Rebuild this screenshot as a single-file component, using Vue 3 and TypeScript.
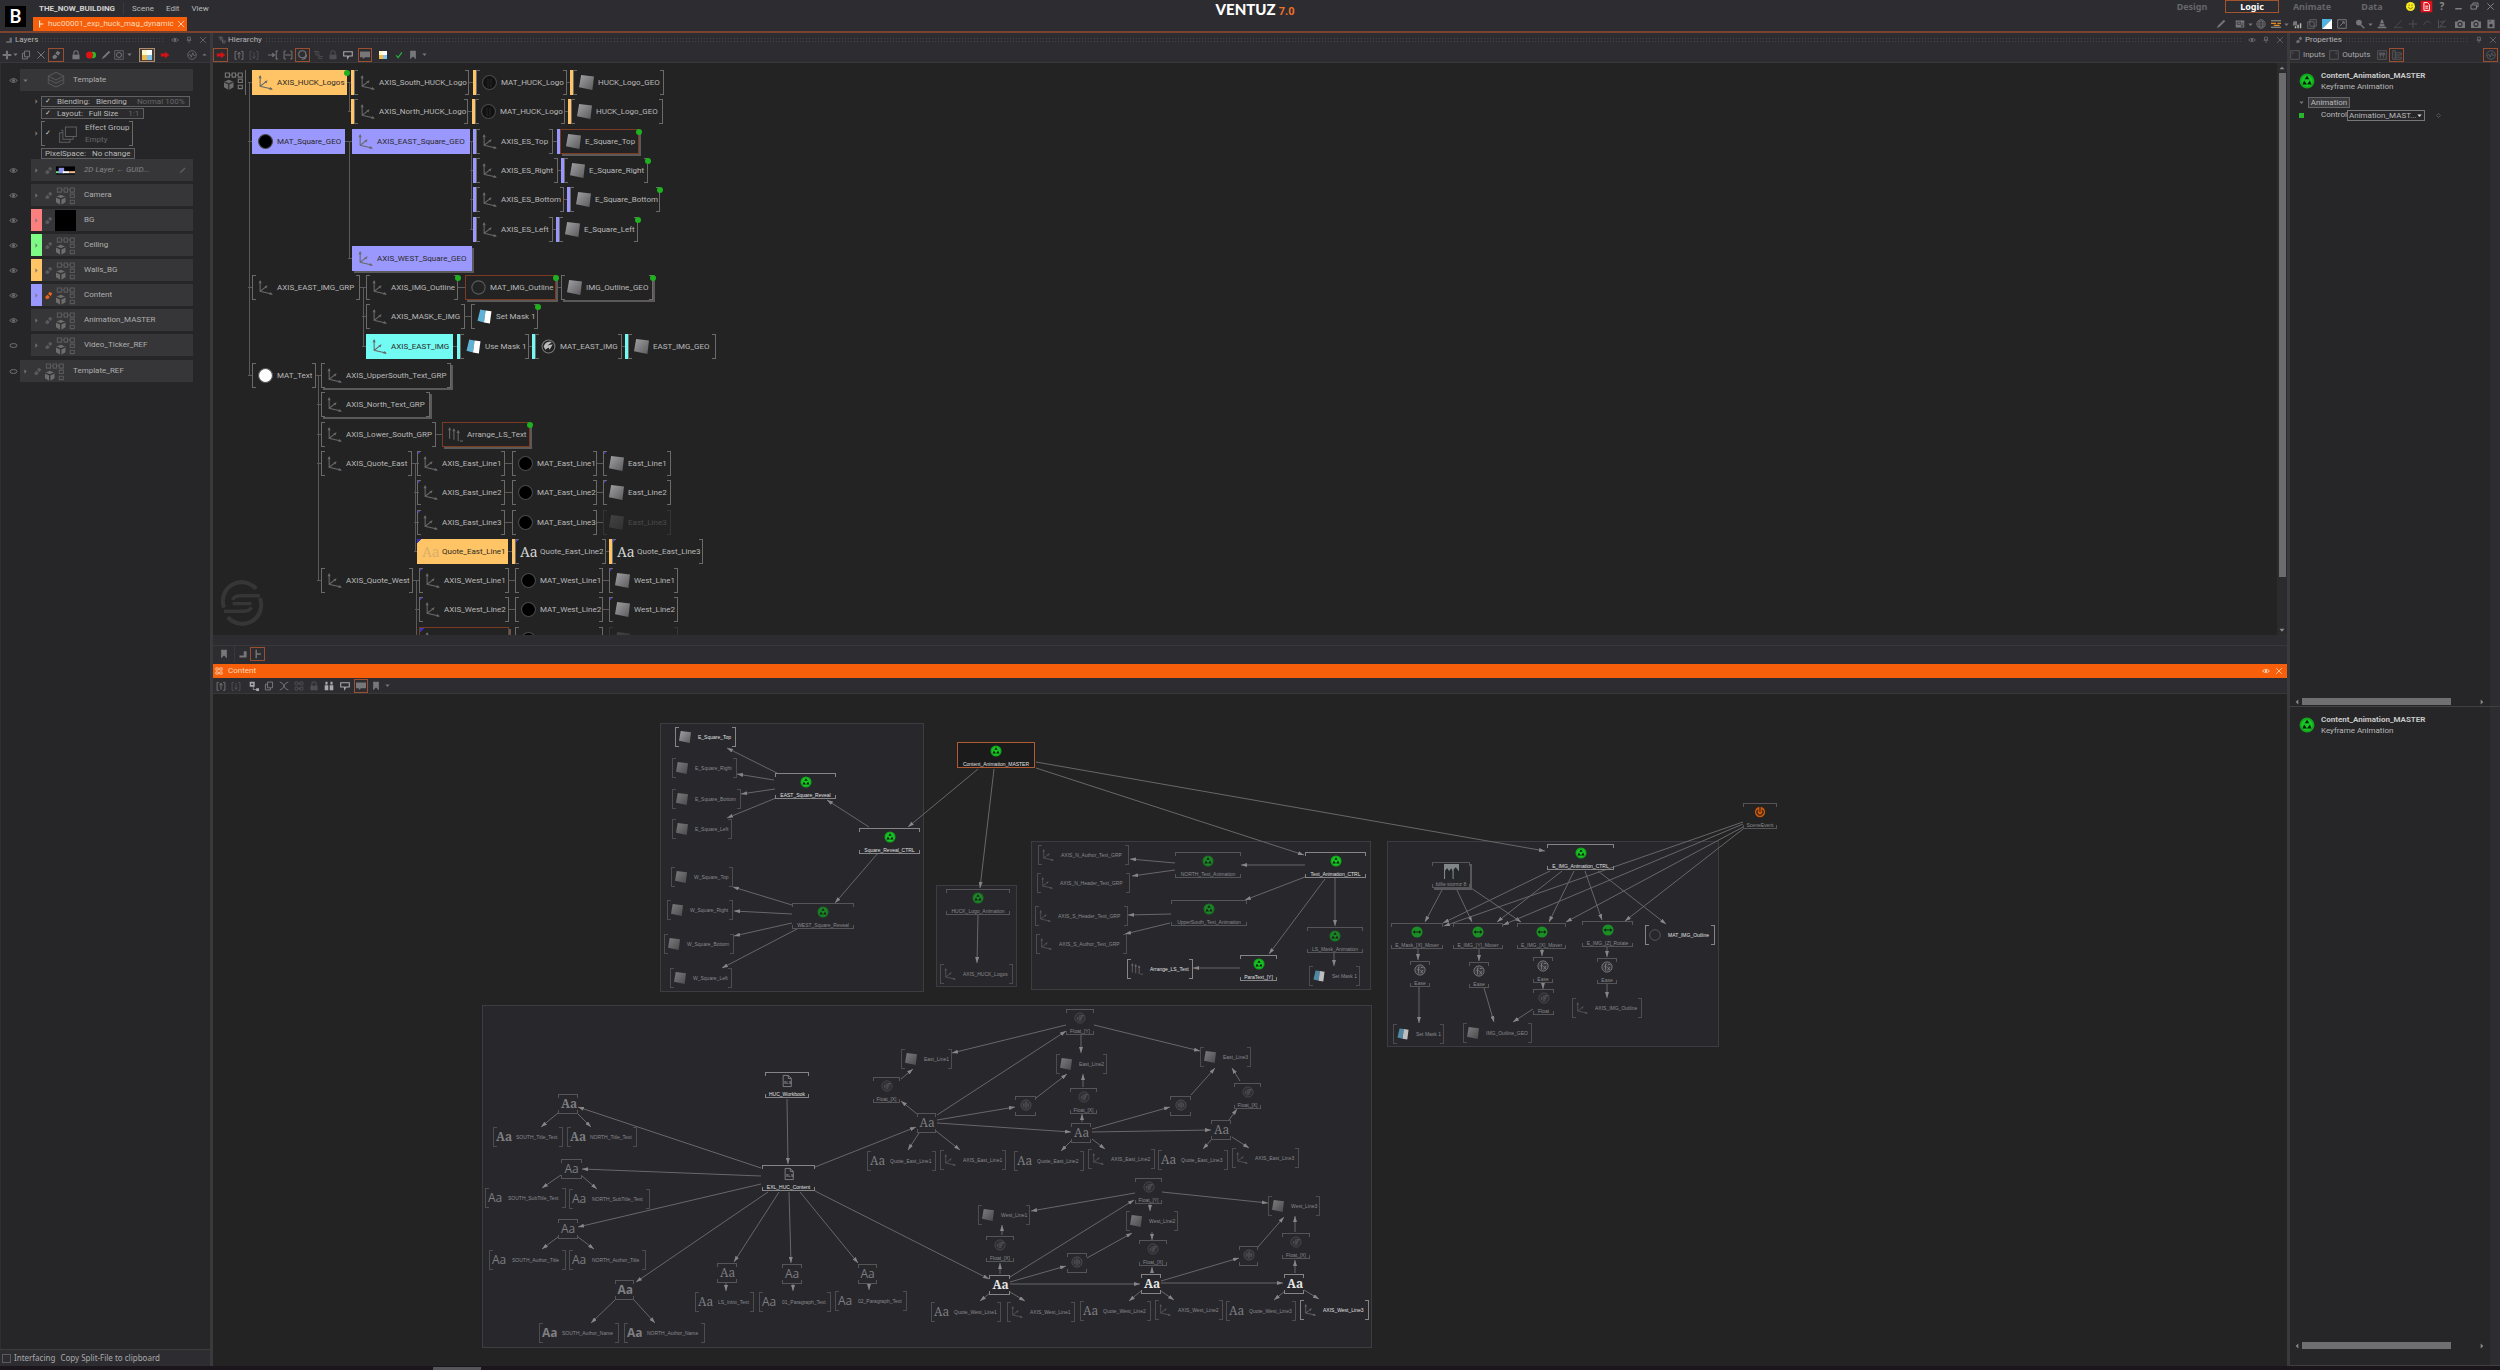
<script setup lang="ts">
import { h } from 'vue'

const S = 'fill="none" stroke="currentColor"'
const ICONS: Record<string, string> = {
  axis: `<path d="M2 1v9.500L13 13M2 10.500 8 6" ${S}/><path d="M0.500 3 2 0l1.500 3zM14 13.500l-3.500.3.800-2.600zM9 5 7.800 8 6 6z" fill="currentColor"/>`,
  multi: `<path d="M1.500 2v9M5.500 3v9M9.500 4v9M11 13h3" ${S}/><path d="M0 3l1.500-3L3 3zM4 4l1.500-3L7 4zM8 5.500l1.500-3 1.500 3z" fill="currentColor"/>`,
  plane: `<path d="M2 0 14 1.500 12.500 14 0 11.500z" fill="url(#planeFill)"/>`,
  black: `<circle cx="7" cy="7" r="6.500" fill="#000" stroke="#4a4a4a"/>`,
  white: `<circle cx="7" cy="7" r="6.500" fill="#fff" stroke="#555"/>`,
  ring: `<circle cx="7" cy="7" r="6.200" fill="none" stroke="#5c5c5c"/>`,
  huck: `<circle cx="7" cy="7" r="6.500" fill="#111" stroke="#4a4a4a"/><path d="M5 3.500v6l1 2V4zM9 3.500v6l-1 2V4z" fill="#000" stroke="#333" stroke-width=".5"/>`,
  photo: `<circle cx="7" cy="7" r="6" fill="#222" stroke="#777"/><path d="M2.500 7C4 3 7 2 10 3L6 6l5-1-3 5-1-2-3 2z" fill="#bbb"/>`,
  mask: `<path d="M3 .5 8 1.300 6.500 12.500 .5 11z" fill="#5fb2d6"/><path d="M8 1.300 13.500 2 12 13.500 6.500 12.500z" fill="#fff"/>`,
  reel: `<circle cx="7" cy="7" r="6.500" fill="#12a51c"/><circle cx="7" cy="7" r="5" fill="#18c625"/><path d="M7 2.500 9 5.500H5zM3 10l1.500-3.500L7 10zM7 10l2.500-3.500L11 10z" fill="#062008"/>`,
  swap: `<circle cx="7" cy="7" r="6.500" fill="#1a9a26"/><path d="M2 7l2.500-2v1.400h5V5L12 7 9.500 9V7.700h-5V9z" fill="#04220a"/>`,
  ease: `<circle cx="7" cy="7" r="6" fill="#3c3c40" stroke="#8a8a8a"/><path d="M6.500 3.500H5.300V11M4 6.500h2.500M7.500 7l3 4M10.500 7l-3 4M8 4h3" ${S}/>`,
  calc: `<circle cx="7" cy="7" r="6" fill="#333338" stroke="#6d6d70" stroke-width=".8"/><path d="M6 4v7M8 10.500V4h3l-3 4M4 6v3" ${S} stroke-width=".8"/>`,
  dotted: `<circle cx="7" cy="7" r="6" fill="#3b3b40" stroke="#66666a"/><path d="M7 3v8M4.500 5v4M9.500 5v4" ${S}/>`,
  event: `<circle cx="7" cy="7" r="6" fill="#d9600f"/><path d="M7 0v7M4.500 4.500a3.500 3.500 0 1 0 5 0" fill="none" stroke="#402008" stroke-width="1.400"/>`,
  xls: `<path d="M2.500 .5h6l3.500 3.500v9.500h-9.500zM8.500 .5V4H12" ${S}/><text x="3.200" y="10" font-size="4.500" font-family="Liberation Sans" font-weight="700" fill="currentColor">XLS</text>`,
  people: `<rect x="0" y="0" width="14" height="14" fill="#8b9293"/><path d="M1 14V6l2-2 2 3v7zM5 14V6l2-2 1 3v7zM9 14V5l2-2 3 4v7z" fill="#24292b"/>`,
  tree: `<path d="M1 1.500h3v3H1zM6 1.500h2.500v3H6zM10.500 1.500h3v3h-3zM4 3h2M8.500 3h2M10.500 6h3v2.500h-3zM10.500 10.500h3V13h-3z" ${S} stroke-width=".8"/><path d="M0 8l3.500-1.500L7 8v4L3.500 14 0 12z" fill="#6d6d6d"/><path d="M0 8l3.500 1.500L7 8M3.500 9.500V14" fill="none" stroke="#333"/>`,
  eye: `<path d="M1 7q6-6 12 0-6 6-12 0z" ${S} stroke-width="1.400"/><circle cx="7" cy="7" r="2" fill="currentColor"/>`,
  shut: `<ellipse cx="7" cy="7" rx="5.500" ry="3" ${S} stroke-width="1.400"/>`,
  pin: `<path d="M4.500 2h5v5h-5zM3 7.500h8M7 8v4" ${S} stroke-width="1.400"/>`,
  x: `<path d="M2 2l10 10M12 2 2 12" ${S} stroke-width="1.400"/>`,
  plus: `<path d="M7 1v12M1 7h12" ${S} stroke-width="3"/>`,
  thin: `<path d="M7 1v12M1 7h12" ${S} stroke-width="1.400"/>`,
  caret: `<path d="M1 4h12L7 11z" fill="currentColor"/>`,
  right: `<path d="M4 1v12l6-6z" fill="currentColor"/>`,
  left: `<path d="M10 1v12L4 7z" fill="currentColor"/>`,
  up: `<path d="M1 10h12L7 4z" fill="currentColor"/>`,
  copy: `<path d="M5 1.500h7v8H5zM5 4.500H2v8h7V10" ${S} stroke-width="1.400"/>`,
  paint: `<path d="M9 1l4 3-3 4-4-3zM5.500 6l3.500 3-2 3-4 .5L2 9z" fill="currentColor"/><path d="M6 5l4 3.500" stroke="#2d2d31"/>`,
  lock: `<path d="M2 6.500h10V13H2z" fill="currentColor"/><path d="M4 6.500V4a3 3 0 0 1 6 0v2.500" ${S} stroke-width="1.500"/>`,
  rg: `<circle cx="9.500" cy="7" r="4.500" fill="#22c022"/><circle cx="5" cy="7" r="5" fill="#e01212"/>`,
  pencil: `<path d="M1 13l2-4 8-8 2 2-8 8z" fill="currentColor"/>`,
  frame: `<path d="M1 1h12v12H1z" ${S}/><circle cx="7" cy="7" r="3.500" ${S} stroke-width="1.400"/>`,
  grid: `<path d="M0 0h7v7H0z" fill="#fff7c8"/><path d="M7 0h7v7H7z" fill="#fff"/><path d="M0 7h7v7H0z" fill="#f2b84a"/><path d="M7 7h7v7H7z" fill="#7fc4ec"/>`,
  arrow: `<path d="M1 5h6V2l6 5-6 5V9H1z" fill="#d01217"/>`,
  wave: `<circle cx="7" cy="7" r="6" ${S}/><path d="M2 8l2-2 2 4 2-6 2 4 2-1" ${S}/>`,
  bup: `<path d="M4 2H1.500v11H4M10 2h2.500v11H10M7 12V4M5 6l2-3 2 3" ${S} stroke-width="1.300"/>`,
  bdn: `<path d="M4 2H1.500v11H4M10 2h2.500v11H10M7 3v8M5 9l2 3 2-3" ${S} stroke-width="1.200" opacity=".5"/>`,
  into: `<path d="M0 7h8M6 4.500 9 7 6 9.500M14 1.500h-2.500v11H14" ${S} stroke-width="1.500"/>`,
  span: `<path d="M4 1.500H1.500v11H4M10 1.500h2.500v11H10M3 7h8" ${S} stroke-width="1.400"/>`,
  moon: `<circle cx="6" cy="6" r="5" ${S} stroke-width="1.500"/><path d="M12 5a6 6 0 0 1-8 8q7 0 8-8z" fill="currentColor"/>`,
  stair: `<path d="M1 2h7M4 2v5h6M8 7v5h5M5 4h4M9 9h5" ${S} stroke-width="1.300"/>`,
  bubble: `<path d="M1 2.500h12v6H8.500l-2 3v-3H1z" ${S} stroke-width="1.500"/>`,
  bubblef: `<path d="M0 2h14v8H7l-3 2.500V10H0z" fill="currentColor"/>`,
  check: `<path d="M2 7.500l3.500 4L12 2.500" ${S} stroke-width="2"/>`,
  book: `<path d="M3 1h8v12L7 9l-4 4z" fill="currentColor"/>`,
  corner: `<path d="M12 3v9H2v-3h6V3z" fill="currentColor"/>`,
  branch: `<path d="M4.500 1v12M4.500 7H11" ${S} stroke-width="2"/>`,
  nodes: `<path d="M1 1h7v7H1zM10 10h4v4h-4z" fill="currentColor"/><path d="M3 3.500h3v2H3z" fill="#2d2d31"/><path d="M6 8v4h4" ${S}/>`,
  cross: `<path d="M1 1.500q5 1 6 5.500 1-4.500 6-5.500M1 12.500q5-1 6-5.500 1 4.500 6 5.500" ${S} stroke-width="1.300"/>`,
  boxes: `<path d="M1.500 1.500h4v4h-4zM8.500 1.500h4v4h-4zM1.500 8.500h4v4h-4zM8.500 8.500h4v4h-4zM5.500 3.500h3M5.500 10.500h3" ${S} stroke-width="1.300"/>`,
  group: `<path d="M1 6h5v7H1zM8 6h5v7H8zM2 1h3v4H2zM9 1h3v4H9z" fill="currentColor"/>`,
  stack: `<path d="M5 1.500h8.500V9H5zM3 4H1.500M3 4v7h8V9M3 6H.5v7.500h8V11" ${S} stroke-width=".8"/>`,
  layers: `<path d="M1 4l6-3 6 3-6 3zM1 4v2.500l6 3 6-3V4M1 6.500V9.500l6 3 6-3v-3" ${S} stroke-width=".7"/>`,
  thumb: `<path d="M0 4h14v6H0z" fill="#000"/><path d="M0 7.500h5v1.500H0z" fill="#5fe08c"/><path d="M2 5h4v4H2z" fill="#8f8fe8"/><path d="M5 7.500h5v1.500H5z" fill="#fff"/><path d="M10 7.500h4v1.500h-4z" fill="#f3b98b"/>`,
  win: `<path d="M1 2h12v10H1z" fill="currentColor"/><path d="M3 4.500h5v3H3zM9 8v2.500h2V5" fill="none" stroke="#2d2d31"/>`,
  globe: `<circle cx="7" cy="7" r="6" ${S}/><ellipse cx="7" cy="7" rx="2.800" ry="6" ${S}/><path d="M1 7h12M2 4h10M2 10h10" ${S}/>`,
  bars: `<path d="M0 2.500h14M0 11.500h14" stroke="#aaa" stroke-width="1.300"/><path d="M0 6h7M9 6h5M4 9h8" stroke="#e98a1d" stroke-width="1.800"/>`,
  hand: `<path d="M2 3h5v6H1z" fill="currentColor"/><path d="M4 13h2v-3H4zM7.500 13h2V8h-2zM11 13h2V6h-2z" fill="#bbb"/>`,
  cube: `<path d="M1 4h9v9H1zM4 1h9v9H4z" ${S}/>`,
  bw: `<path d="M0 0h14L0 14z" fill="#4db4e4"/><path d="M14 0v14H0z" fill="#fff"/>`,
  scale: `<path d="M1 1h12v12H1zM4 10l6-6M7 4h3v3" ${S} stroke-width="1.400"/>`,
  lens: `<circle cx="5.500" cy="5" r="4" fill="currentColor"/><path d="M8 8l5 5" ${S} stroke-width="2"/>`,
  cone: `<path d="M6 1h2l3 9H3zM1 11h12v2H1z" fill="currentColor"/><path d="M4 6.500h6" stroke="#2d2d31"/>`,
  angle: `<path d="M12 2 2 12h11" ${S} opacity=".5"/>`,
  arc: `<path d="M2 9q2-6 6-6 4 1 4 3" ${S} opacity=".5"/>`,
  axes: `<path d="M2 1v12M12 1 3 12M4 11h9M4 4h6" ${S} opacity=".7"/>`,
  cam: `<path d="M0 3.500h3.500L5 1.500h4l1.500 2H14V12.500H0z" fill="currentColor"/><circle cx="7" cy="7.500" r="2.800" fill="none" stroke="#2d2d31" stroke-width="1.600"/>`,
  disk: `<path d="M2 1h10v12H2z" fill="currentColor"/><circle cx="7" cy="9" r="2.400" fill="#2d2d31"/><path d="M4 3h3" stroke="#2d2d31"/>`,
  smile: `<circle cx="7" cy="7" r="7" fill="#f6ea22"/><path d="M3.500 8.500q3.500 4 7 0M4.800 4v2M9.200 4v2" fill="none" stroke="#6a6200" stroke-width="1.300"/>`,
  doc: `<path d="M-2-2h18v18H-2z" fill="#e0101c"/><path d="M3 1h5.500L11.500 4v9H3zM5 6.500h4.500M5 9.500h4.500" fill="none" stroke="#fff" stroke-width="1.500"/>`,
  min: `<path d="M2 10.500h10" ${S} stroke-width="2"/>`,
  rest: `<path d="M4.500 4V1.500h8v6H10M1.500 4.500H10v6.500H1.500z" ${S} stroke-width="1.400"/>`,
  inp: `<path d="M1 1h12v12H1zM4 3v3" ${S}/>`,
  outp: `<path d="M1 1h12v12H1zM10 3v3" ${S}/>`,
  pins: `<path d="M1 1h12v12H1zM5 4v7M9 4v7M3.500 4h3v3h-3zM7.500 4h3v3h-3z" ${S}/>`,
  rows: `<path d="M1 1h3.500v12H1zM4.500 4H13v3H4.500M4.500 10H13v3H4.500" ${S}/>`,
  dia: `<path d="M7 3l4 4-4 4-4-4z" ${S} stroke-width="1.400"/>`,
  ventuz: `<path d="M1.300 8.500A6 6 0 0 1 11.500 2.500M12.700 5.500A6 6 0 0 1 2.500 11.500" ${S} stroke-width="1.300"/><path d="M12.700 4.700H6.500Q4.500 4.700 4 6M4 7.200h6M1.300 9.600h6.200Q9.500 9.600 10 8.400" ${S} stroke-width="1.100"/>`,
}
const Ico = (p: { n: string }) => h('svg', { viewBox: '0 0 14 14', class: 'ico', 'aria-hidden': 'true', innerHTML: ICONS[p.n] })

type Tool = [icon: string, width: number, look?: string]
const layerTools: Tool[] = [['plus', 10], ['caret', 6, 'small'], ['copy', 15], ['x', 15], ['paint', 16, 'box'], ['', 4], ['lock', 15], ['rg', 15], ['pencil', 15], ['frame', 12], ['caret', 8, 'small'], ['', 6], ['grid', 16, 'box pale'], ['', 2], ['arrow', 15], ['', 12], ['wave', 16], ['up', 8, 'small']]
const hierTools: Tool[] = [['arrow', 15, 'box'], ['', 3], ['bup', 15], ['bdn', 15], ['', 4], ['into', 15], ['span', 15], ['moon', 15, 'box'], ['stair', 15, 'off'], ['lock', 15, 'off'], ['bubble', 16, 'lit'], ['', 2], ['bubblef', 14, 'box'], ['', 3], ['grid', 15, 'tiny'], ['', 1], ['check', 15, 'green'], ['book', 14], ['caret', 8, 'small']]
const contentTools: Tool[] = [['bup', 15], ['bdn', 15], ['', 3], ['nodes', 15, 'lit'], ['copy', 15], ['cross', 15], ['boxes', 15, 'off'], ['lock', 15, 'off'], ['group', 16, 'lit'], ['bubble', 15, 'lit'], ['', 2], ['bubblef', 14, 'box'], ['book', 15], ['caret', 8, 'small']]
const topTools: Tool[] = [['pencil', 16], ['', 3], ['win', 16], ['caret', 5, 'small'], ['globe', 16], ['bars', 14], ['caret', 6, 'small'], ['hand', 15], ['cube', 15], ['bw', 15], ['scale', 15], ['', 3], ['lens', 15], ['caret', 7, 'small'], ['cone', 16], ['angle', 15], ['thin', 15, 'off'], ['arc', 14], ['axes', 16], ['', 2], ['cam', 16], ['cam', 15], ['disk', 15]]
const windowTools = ['smile', 'doc', '?', 'min', 'rest', 'x']
const modes = ['Design', 'Logic', 'Animate', 'Data']

interface Layer { name: string; icon: string; color?: string; off?: boolean; active?: boolean; italic?: boolean }
const layers: Layer[] = [
  { name: '2D Layer ← GUID...', icon: 'thumb', italic: true },
  { name: 'Camera', icon: 'tree' },
  { name: 'BG', icon: 'bg', color: '#fb7f7f' },
  { name: 'Ceiling', icon: 'tree', color: '#7dfb84' },
  { name: 'Walls_BG', icon: 'tree', color: '#fec465' },
  { name: 'Content', icon: 'tree', color: '#9a98fd', active: true },
  { name: 'Animation_MASTER', icon: 'tree' },
  { name: 'Video_Ticker_REF', icon: 'tree', off: true },
]

// Hierarchy tree: row, left, right, icon, label, look
type HNode = [number, number, number, string, string, string?]
const tree: HNode[] = [
  [0, 252, 347, 'axis', 'AXIS_HUCK_Logos', 'fy dot'], [0, 351, 469, 'axis', 'AXIS_South_HUCK_Logo', 'by'], [0, 473, 567, 'huck', 'MAT_HUCK_Logo', 'by'], [0, 570, 664, 'plane', 'HUCK_Logo_GEO', 'by'],
  [1, 351, 468, 'axis', 'AXIS_North_HUCK_Logo', 'by'], [1, 472, 565, 'huck', 'MAT_HUCK_Logo', 'by'], [1, 568, 663, 'plane', 'HUCK_Logo_GEO', 'by'],
  [2, 252, 345, 'black', 'MAT_Square_GEO', 'fp'], [2, 352, 470, 'axis', 'AXIS_EAST_Square_GEO', 'fp'], [2, 473, 553, 'axis', 'AXIS_ES_Top', 'bp'], [2, 557, 639, 'plane', 'E_Square_Top', 'bp sel shade dot'],
  [3, 473, 558, 'axis', 'AXIS_ES_Right', 'bp'], [3, 561, 648, 'plane', 'E_Square_Right', 'bp dot'],
  [4, 473, 564, 'axis', 'AXIS_ES_Bottom', 'bp'], [4, 567, 660, 'plane', 'E_Square_Bottom', 'bp dot'],
  [5, 473, 553, 'axis', 'AXIS_ES_Left', 'bp'], [5, 556, 638, 'plane', 'E_Square_Left', 'bp dot'],
  [6, 352, 472, 'axis', 'AXIS_WEST_Square_GEO', 'fp shade'],
  [7, 252, 360, 'axis', 'AXIS_EAST_IMG_GRP'], [7, 366, 458, 'axis', 'AXIS_IMG_Outline', 'dot'], [7, 465, 556, 'ring', 'MAT_IMG_Outline', 'sel shade dot'], [7, 561, 653, 'plane', 'IMG_Outline_GEO', 'shade dot'],
  [8, 366, 465, 'axis', 'AXIS_MASK_E_IMG'], [8, 471, 538, 'mask', 'Set Mask 1', 'dot'],
  [9, 366, 453, 'axis', 'AXIS_EAST_IMG', 'fc'], [9, 457, 529, 'mask', 'Use Mask 1', 'bc'], [9, 532, 622, 'photo', 'MAT_EAST_IMG', 'bc'], [9, 625, 716, 'plane', 'EAST_IMG_GEO', 'bc'],
  [10, 252, 316, 'white', 'MAT_Text'], [10, 321, 451, 'axis', 'AXIS_UpperSouth_Text_GRP', 'shade'],
  [11, 321, 430, 'axis', 'AXIS_North_Text_GRP', 'shade'],
  [12, 321, 436, 'axis', 'AXIS_Lower_South_GRP'], [12, 442, 530, 'multi', 'Arrange_LS_Text', 'sel shade dot'],
  [13, 321, 412, 'axis', 'AXIS_Quote_East'], [13, 417, 505, 'axis', 'AXIS_East_Line1', 'mark'], [13, 512, 597, 'black', 'MAT_East_Line1'], [13, 603, 671, 'plane', 'East_Line1', 'mark'],
  [14, 417, 505, 'axis', 'AXIS_East_Line2', 'mark'], [14, 512, 597, 'black', 'MAT_East_Line2'], [14, 603, 671, 'plane', 'East_Line2', 'mark'],
  [15, 417, 505, 'axis', 'AXIS_East_Line3', 'mark'], [15, 512, 597, 'black', 'MAT_East_Line3'], [15, 603, 671, 'plane', 'East_Line3', 'faded'],
  [16, 417, 508, 'Aa', 'Quote_East_Line1', 'fy mark'], [16, 512, 606, 'Aa', 'Quote_East_Line2', 'by mark'], [16, 609, 703, 'Aa', 'Quote_East_Line3', 'by mark'],
  [17, 321, 413, 'axis', 'AXIS_Quote_West'], [17, 419, 509, 'axis', 'AXIS_West_Line1', 'mark'], [17, 515, 603, 'black', 'MAT_West_Line1'], [17, 609, 678, 'plane', 'West_Line1', 'mark'],
  [18, 419, 509, 'axis', 'AXIS_West_Line2', 'mark'], [18, 515, 603, 'black', 'MAT_West_Line2'], [18, 609, 678, 'plane', 'West_Line2', 'mark'],
  [19, 419, 509, 'axis', '', 'mark sel shade'], [19, 515, 603, 'black', ''], [19, 609, 678, 'plane', '', 'faded'],
]
const rowY = (r: number) => Math.round(82 + 29.3 * r)
// Vertical trunks: x, first row, last row, rows that branch off
const trunks: [number, number, number, number[]][] = [
  [249, 0, 10, [0, 2, 7, 10]], [349, 0, 1, [0, 1]], [349, 2, 6, [2, 6]], [471, 2, 5, [2, 3, 4, 5]], [363, 7, 9, [7, 8, 9]],
  [318, 10, 17, [10, 11, 12, 13, 17]], [415, 13, 16, [13, 14, 15, 16]], [416, 17, 20, [17, 18, 19]],
]
const links: number[][] = []
tree.forEach((n, i) => {
  const next = tree[i + 1]
  if (next && next[0] === n[0]) links.push([n[2], next[1], rowY(n[0])])
})

const groups = [[660, 723, 264, 269], [936, 885, 81, 102], [1031, 841, 340, 149], [1387, 841, 332, 206], [482, 1005, 890, 343]]
// Bracket nodes: left, right, centre y, icon, label, look
type BNode = [number, number, number, string, string, string?]
const brackets: BNode[] = [
  [675, 736, 737, 'plane', 'E_Square_Top', 'hi'], [672, 737, 768, 'plane', 'E_Square_Right'], [672, 741, 799, 'plane', 'E_Square_Bottom'], [672, 732, 829, 'plane', 'E_Square_Left'],
  [671, 733, 877, 'plane', 'W_Square_Top'], [667, 733, 910, 'plane', 'W_Square_Right'], [664, 734, 944, 'plane', 'W_Square_Bottom'], [670, 732, 978, 'plane', 'W_Square_Left'],
  [940, 1013, 974, 'axis', 'AXIS_HUCK_Logos'],
  [1038, 1129, 855, 'axis', 'AXIS_N_Author_Text_GRP'], [1037, 1130, 883, 'axis', 'AXIS_N_Header_Text_GRP'], [1035, 1128, 916, 'axis', 'AXIS_S_Header_Text_GRP'], [1036, 1127, 944, 'axis', 'AXIS_S_Author_Text_GRP'],
  [1127, 1193, 969, 'multi', 'Arrange_LS_Text', 'hi'], [1309, 1360, 976, 'mask', 'Set Mask 1'],
  [1645, 1715, 935, 'ring', 'MAT_IMG_Outline', 'hi'], [1572, 1642, 1008, 'axis', 'AXIS_IMG_Outline'], [1393, 1444, 1034, 'mask', 'Set Mask 1'], [1463, 1532, 1033, 'plane', 'IMG_Outline_GEO'],
  [493, 563, 1137, 'Aa', 'SOUTH_Title_Text', 'bold'], [567, 637, 1137, 'Aa', 'NORTH_Title_Text', 'bold'],
  [485, 566, 1198, 'Aa', 'SOUTH_SubTitle_Text', 'sans'], [569, 650, 1199, 'Aa', 'NORTH_SubTitle_Text', 'sans'],
  [489, 566, 1260, 'Aa', 'SOUTH_Author_Title', 'sans'], [569, 646, 1260, 'Aa', 'NORTH_Author_Title', 'sans'],
  [539, 619, 1333, 'Aa', 'SOUTH_Author_Name', 'sans bold'], [624, 705, 1333, 'Aa', 'NORTH_Author_Name', 'sans bold'],
  [695, 754, 1302, 'Aa', 'LS_Intro_Text'], [759, 831, 1302, 'Aa', '01_Paragraph_Text', 'sans'], [835, 907, 1301, 'Aa', '02_Paragraph_Text', 'sans'],
  [901, 952, 1059, 'plane', 'East_Line1'], [1056, 1107, 1064, 'plane', 'East_Line2'], [1200, 1251, 1057, 'plane', 'East_Line3'],
  [867, 936, 1161, 'Aa', 'Quote_East_Line1'], [940, 1006, 1160, 'axis', 'AXIS_East_Line1'], [1014, 1084, 1161, 'Aa', 'Quote_East_Line2'], [1088, 1155, 1159, 'axis', 'AXIS_East_Line2'], [1158, 1228, 1160, 'Aa', 'Quote_East_Line3'], [1232, 1299, 1158, 'axis', 'AXIS_East_Line3'],
  [978, 1030, 1215, 'plane', 'West_Line1'], [1126, 1178, 1221, 'plane', 'West_Line2'], [1268, 1320, 1206, 'plane', 'West_Line3'],
  [931, 1001, 1312, 'Aa', 'Quote_West_Line1'], [1007, 1075, 1312, 'axis', 'AXIS_West_Line1'], [1080, 1151, 1311, 'Aa', 'Quote_West_Line2'], [1155, 1223, 1310, 'axis', 'AXIS_West_Line2'], [1226, 1296, 1311, 'Aa', 'Quote_West_Line3'], [1300, 1369, 1310, 'axis', 'AXIS_West_Line3', 'hi'],
]
// Upright nodes: left, right, top, icon, label, look
const uprights: BNode[] = [
  [775, 836, 773, 'reel', 'EAST_Square_Reveal', 'hi'], [859, 920, 828, 'reel', 'Square_Reveal_CTRL', 'hi'], [792, 854, 903, 'reel', 'WEST_Square_Reveal'],
  [957, 1035, 742, 'reel', 'Content_Animation_MASTER', 'hi picked'], [946, 1010, 889, 'reel', 'HUCK_Logo_Animation'],
  [1175, 1241, 852, 'reel', 'NORTH_Text_Animation'], [1171, 1247, 900, 'reel', 'UpperSouth_Text_Animation'], [1305, 1366, 852, 'reel', 'Text_Animation_CTRL', 'hi'], [1307, 1363, 927, 'reel', 'LS_Mask_Animation'], [1240, 1277, 955, 'reel', 'ParaText_[Y]', 'hi'],
  [1547, 1614, 844, 'reel', 'E_IMG_Animation_CTRL', 'hi'], [1743, 1777, 803, 'event', 'SceneEvent', 'mid'], [1432, 1470, 862, 'people', 'billie stormz 8', 'shade'],
  [1391, 1443, 923, 'swap', 'E_Mask_[X]_Mover', 'mid'], [1453, 1503, 923, 'swap', 'E_IMG_[Y]_Mover', 'mid'], [1517, 1566, 923, 'swap', 'E_IMG_[X]_Mover', 'mid'], [1582, 1633, 921, 'swap', 'E_IMG_[Z]_Rotate', 'mid'],
  [1410, 1430, 961, 'ease', 'Ease', 'mid'], [1469, 1489, 962, 'ease', 'Ease', 'mid'], [1533, 1553, 957, 'ease', 'Ease', 'mid'], [1597, 1617, 958, 'ease', 'Ease', 'mid'], [1533, 1554, 989, 'calc', 'Float'],
  [765, 809, 1072, 'xls', 'HUC_Workbook', 'hi'], [762, 815, 1165, 'xls', 'EXL_HUC_Content', 'hi'],
  [558, 578, 1094, 'Aa', '', 'bold'], [561, 582, 1159, 'Aa', '', 'sans'], [558, 578, 1219, 'Aa', '', 'sans'], [615, 634, 1280, 'Aa', '', 'sans bold'], [717, 737, 1263, 'Aa', ''], [782, 802, 1264, 'Aa', '', 'sans'], [858, 877, 1264, 'Aa', '', 'sans'],
  [1066, 1094, 1009, 'calc', 'Float_[Y]'], [873, 900, 1077, 'calc', 'Float_[X]'], [1070, 1097, 1088, 'calc', 'Float_[X]'], [1234, 1261, 1083, 'calc', 'Float_[X]'], [1015, 1036, 1096, 'dotted', ''], [1170, 1191, 1096, 'dotted', ''],
  [917, 936, 1113, 'Aa', ''], [1071, 1091, 1123, 'Aa', ''], [1211, 1231, 1120, 'Aa', ''],
  [1135, 1162, 1178, 'calc', 'Float_[Y]'], [986, 1014, 1236, 'calc', 'Float_[X]'], [1139, 1167, 1240, 'calc', 'Float_[X]'], [1282, 1310, 1233, 'calc', 'Float_[X]'], [1067, 1087, 1253, 'dotted', ''], [1239, 1258, 1246, 'dotted', ''],
  [989, 1010, 1275, 'Aa', '', 'hi bold'], [1141, 1161, 1274, 'Aa', '', 'hi bold'], [1284, 1304, 1274, 'Aa', '', 'hi bold'],
]
const edges = [
  [978, 769, 908, 827], [994, 769, 980, 888], [1036, 762, 1545, 851], [1036, 768, 1304, 855], [869, 827, 827, 800], [878, 853, 835, 903], [777, 773, 727, 748], [774, 780, 737, 774], [775, 789, 741, 794], [776, 798, 727, 818],
  [792, 905, 733, 887], [792, 914, 734, 911], [792, 923, 734, 936], [797, 929, 722, 968], [978, 915, 977, 963],
  [1175, 863, 1130, 859], [1175, 870, 1132, 876], [1305, 865, 1241, 865], [1305, 877, 1245, 900], [1171, 914, 1128, 915], [1170, 923, 1125, 934], [1325, 879, 1269, 954], [1335, 878, 1335, 926], [1240, 968, 1193, 968], [1334, 953, 1334, 966],
  [1550, 871, 1443, 923], [1562, 871, 1497, 922], [1574, 871, 1549, 922], [1585, 871, 1602, 920], [1598, 871, 1666, 924], [1442, 890, 1425, 922], [1457, 890, 1472, 922], [1471, 888, 1521, 922],
  [1743, 822, 1444, 926], [1743, 824, 1503, 925], [1743, 827, 1566, 922], [1743, 829, 1625, 921], [1418, 949, 1418, 960], [1479, 949, 1479, 961], [1542, 949, 1542, 956], [1607, 947, 1607, 957], [1419, 987, 1419, 1023], [1484, 988, 1494, 1022], [1543, 983, 1543, 989], [1533, 1009, 1513, 1022], [1607, 984, 1607, 998],
  [787, 1099, 788, 1164], [761, 1168, 578, 1107], [761, 1176, 582, 1169], [761, 1184, 578, 1227], [768, 1192, 636, 1282], [779, 1192, 734, 1262], [789, 1192, 791, 1263], [800, 1192, 858, 1263], [815, 1167, 916, 1127], [815, 1191, 989, 1279],
  [558, 1113, 541, 1127], [578, 1114, 591, 1127], [561, 1175, 542, 1188], [582, 1176, 597, 1189], [558, 1237, 542, 1249], [578, 1237, 594, 1249], [615, 1300, 591, 1323], [634, 1300, 655, 1323], [726, 1282, 726, 1291], [793, 1283, 793, 1291], [869, 1284, 869, 1290],
  [1066, 1025, 952, 1053], [1094, 1025, 1200, 1051], [937, 1115, 1066, 1031], [1081, 1035, 1081, 1053], [901, 1079, 913, 1069], [917, 1114, 901, 1101], [1036, 1098, 1067, 1074], [1083, 1087, 1083, 1074], [1082, 1122, 1082, 1114], [937, 1120, 1015, 1107], [937, 1123, 1071, 1132], [1092, 1129, 1170, 1107], [1092, 1132, 1211, 1130], [1191, 1095, 1215, 1068], [1240, 1081, 1232, 1068], [1229, 1120, 1237, 1109],
  [919, 1133, 908, 1150], [936, 1131, 960, 1150], [1071, 1141, 1061, 1151], [1092, 1139, 1105, 1149], [1212, 1139, 1203, 1149], [1232, 1137, 1249, 1148],
  [1135, 1193, 1031, 1211], [1162, 1192, 1268, 1203], [1010, 1277, 1134, 1200], [1150, 1204, 1150, 1211], [1002, 1235, 1002, 1225], [1000, 1274, 1000, 1263], [1087, 1258, 1132, 1233], [1152, 1232, 1152, 1240], [1152, 1273, 1152, 1267], [1010, 1282, 1066, 1266], [1010, 1284, 1140, 1284], [1161, 1281, 1239, 1258], [1161, 1283, 1283, 1283], [1258, 1247, 1284, 1217], [1295, 1232, 1295, 1216], [1295, 1273, 1295, 1260],
  [990, 1293, 980, 1301], [1010, 1292, 1025, 1301], [1141, 1291, 1129, 1301], [1161, 1291, 1174, 1300], [1285, 1291, 1274, 1300], [1304, 1290, 1319, 1299],
]
const px = (left: number, top: number, width: number, height?: number) => ({ left: left + 'px', top: top + 'px', width: width + 'px', height: height ? height + 'px' : undefined })
</script>

<template>
  <div class="app">
    <svg class="defs" aria-hidden="true">
      <defs>
        <linearGradient id="planeFill" x1="0" y1="0" x2="1" y2="1"><stop offset="0" stop-color="#a2a2a4" /><stop offset="1" stop-color="#5a5a5d" /></linearGradient>
        <marker id="tip" viewBox="0 0 6 4" refX="6" refY="2" markerWidth="6" markerHeight="4" orient="auto"><path d="M0 0L6 2L0 4z" fill="#87878a" /></marker>
      </defs>
    </svg>

    <header class="top">
      <div class="brandside">
        <div class="logo">B</div>
        <div class="menus">
          <nav class="menu"><strong>THE_NOW_BUILDING</strong><button>Scene</button><button>Edit</button><button>View</button></nav>
          <div class="tab"><Ico n="branch" /><span>huc00001_exp_huck_mag_dynamic</span><button aria-label="Close tab"><Ico n="x" /></button></div>
        </div>
      </div>
      <div class="brand"><span>VENTUZ</span><small>7.0</small></div>
      <div class="topright">
        <nav class="modes">
          <button v-for="m in modes" :key="m" :class="{ on: m === 'Logic' }">{{ m }}</button>
          <span class="win"><button v-for="w in windowTools" :key="w" :aria-label="w"><template v-if="w === '?'">?</template><Ico v-else :n="w" /></button></span>
        </nav>
        <div class="tools"><template v-for="(t, i) in topTools" :key="i"><button v-if="t[0]" :class="['tool', t[2]]" :style="{ width: t[1] + 'px' }" :aria-label="t[0]"><Ico :n="t[0]" /></button><i v-else :style="{ width: t[1] + 'px' }"></i></template></div>
      </div>
    </header>

    <main class="main">
      <aside class="layers">
        <div class="head"><Ico n="corner" /><span>Layers</span><i class="grip"></i><Ico n="eye" /><Ico n="pin" /><Ico n="x" /></div>
        <div class="tools bar"><template v-for="(t, i) in layerTools" :key="i"><button v-if="t[0]" :class="['tool', t[2]]" :style="{ width: t[1] + 'px' }" :aria-label="t[0]"><Ico :n="t[0]" /></button><i v-else :style="{ width: t[1] + 'px' }"></i></template></div>
        <div class="laybody">
          <div class="layer outer"><Ico n="eye" class="see" /><div class="strip"><Ico n="caret" class="tri" /><Ico n="layers" class="big" /><span>Template</span></div></div>
          <div class="props">
            <div class="prop"><Ico n="right" class="tri" /><label class="boxed"><input type="checkbox" checked /><span>Blending:</span><span>Blending</span><em>Normal 100%</em></label></div>
            <div class="prop noarrow"><label class="boxed"><input type="checkbox" checked /><span>Layout:</span><span>Full Size</span><em>1:1</em></label></div>
            <div class="prop"><Ico n="right" class="tri" /><label class="effect brk"><input type="checkbox" checked /><Ico n="stack" /><span>Effect Group<br /><em>Empty</em></span></label></div>
            <div class="prop noarrow"><div class="boxed"><span>PixelSpace:</span><span>No change</span></div></div>
          </div>
          <div class="list">
            <div v-for="l in layers" :key="l.name" class="layer">
              <Ico :n="l.off ? 'shut' : 'eye'" class="see" />
              <div class="strip">
                <span class="tag" :style="{ background: l.color }"><Ico n="right" class="tri" /></span>
                <Ico n="paint" :class="['brush', { active: l.active }]" />
                <i v-if="l.icon === 'bg'" class="bgthumb"></i><Ico v-else :n="l.icon" class="thumb" />
                <span :class="{ italic: l.italic }">{{ l.name }}</span>
                <Ico v-if="l.italic" n="pencil" class="edit" />
              </div>
            </div>
          </div>
          <div class="layer outer last"><Ico n="shut" class="see" /><div class="strip"><Ico n="right" class="tri" /><Ico n="paint" class="brush" /><Ico n="tree" class="thumb" /><span>Template_REF</span></div></div>
        </div>
        <footer class="status"><label><input type="checkbox" /><span>Interfacing</span></label><a href="#">Copy Split-File to clipboard</a></footer>
      </aside>

      <section class="center">
        <div class="head"><Ico n="stair" /><span>Hierarchy</span><i class="grip"></i><Ico n="eye" /><Ico n="pin" /><Ico n="x" /></div>
        <div class="tools bar"><template v-for="(t, i) in hierTools" :key="i"><button v-if="t[0]" :class="['tool', t[2]]" :style="{ width: t[1] + 'px' }" :aria-label="t[0]"><Ico :n="t[0]" /></button><i v-else :style="{ width: t[1] + 'px' }"></i></template></div>
        <div class="hier">
          <div class="world upper">
            <svg class="wires" width="900" height="700">
              <path v-for="(t, i) in trunks" :key="i" :d="`M${t[0] + 0.5} ${rowY(t[1])}V${rowY(t[2])}` + t[3].map(r => `M${t[0] - 1} ${rowY(r) + 0.5}h5`).join('')" />
              <path v-for="(l, i) in links" :key="'l' + i" :d="`M${l[0]} ${l[2] + 0.5}H${l[1]}`" />
            </svg>
            <div class="root"><Ico n="tree" /></div>
            <div v-for="(n, i) in tree" :key="i" :class="['hnode', n[5]]" :style="px(n[1], rowY(n[0]) - 12, n[2] - n[1])">
              <div class="hbody brk"><span v-if="n[3] === 'Aa'" class="aa">Aa</span><Ico v-else :n="n[3]" /><span v-if="n[4]">{{ n[4] }}</span></div>
            </div>
            <Ico n="ventuz" class="water" />
          </div>
          <div class="vscroll"><Ico n="up" /><i class="vthumb"></i><Ico n="caret" /></div>
        </div>
        <div class="hfoot"><div><button class="tool" aria-label="Bookmark"><Ico n="book" /></button><i></i><button class="tool" aria-label="Layers"><Ico n="corner" /></button><button class="tool box" aria-label="Branch"><Ico n="branch" /></button></div></div>
        <div class="ctitle"><Ico n="boxes" /><span>Content</span><Ico n="eye" /><Ico n="x" /></div>
        <div class="tools bar"><template v-for="(t, i) in contentTools" :key="i"><button v-if="t[0]" :class="['tool', t[2]]" :style="{ width: t[1] + 'px' }" :aria-label="t[0]"><Ico :n="t[0]" /></button><i v-else :style="{ width: t[1] + 'px' }"></i></template></div>
        <div class="graph">
          <div class="world lower">
            <div v-for="(g, i) in groups" :key="i" class="group" :style="px(g[0], g[1], g[2], g[3])"></div>
            <svg class="wires" width="1900" height="1400"><line v-for="(e, i) in edges" :key="i" :x1="e[0]" :y1="e[1]" :x2="e[2]" :y2="e[3]" marker-end="url(#tip)" /></svg>
            <div v-for="(n, i) in brackets" :key="'b' + i" :class="['bnode', 'brk', n[5]]" :style="px(n[0], n[2] - 10, n[1] - n[0])"><span v-if="n[3] === 'Aa'" class="aa">Aa</span><Ico v-else :n="n[3]" /><span>{{ n[4] }}</span></div>
            <div v-for="(n, i) in uprights" :key="'u' + i" :class="['unode', n[5], { bare: !n[4] }]" :style="px(n[0], n[2], n[1] - n[0])"><span v-if="n[3] === 'Aa'" class="aa">Aa</span><Ico v-else :n="n[3]" :class="n[3]" /><span v-if="n[4]">{{ n[4] }}</span></div>
          </div>
        </div>
      </section>

      <aside class="right">
        <div class="head"><Ico n="paint" /><span>Properties</span><i class="grip"></i><Ico n="pin" /><Ico n="x" /></div>
        <div class="tools bar io"><button><Ico n="inp" />Inputs</button><button><Ico n="outp" />Outputs</button><button class="tool" aria-label="Pins"><Ico n="pins" /></button><button class="tool box" aria-label="Rows"><Ico n="rows" /></button><button class="tool box end" aria-label="Wave"><Ico n="wave" /></button></div>
        <section class="pane one">
          <div class="inner">
            <div class="obj"><Ico n="reel" /><div><strong>Content_Animation_MASTER</strong><span>Keyframe Animation</span></div></div>
            <div class="sect"><Ico n="caret" class="tri" /><button>Animation</button></div>
            <div class="field"><i class="led"></i><label for="ctl">Control</label><span class="combo"><select id="ctl"><option>Animation_MAST...</option></select><Ico n="caret" /></span><Ico n="dia" class="dia" /></div>
            <div class="hscroll"><Ico n="left" /><i></i><Ico n="right" /></div>
          </div>
        </section>
        <section class="pane two">
          <div class="inner">
            <div class="obj"><Ico n="reel" /><div><strong>Content_Animation_MASTER</strong><span>Keyframe Animation</span></div></div>
            <div class="hscroll"><Ico n="left" /><i></i><Ico n="right" /></div>
          </div>
        </section>
      </aside>
    </main>
    <div class="foot"><i></i></div>
  </div>
</template>

<style>
body { margin: 0; background: #242424; }
</style>

<style scoped>
.app { display: flex; flex-direction: column; height: 100vh; min-height: 700px; background: #242424; color: #b9b9b9; font: 8px/12px Roboto, sans-serif; overflow: hidden; }
.app * { box-sizing: border-box; }
.defs { width: 0; height: 0; position: absolute; }
button { border: 0; padding: 0; margin: 0; background: none; color: inherit; font: inherit; }
a { color: inherit; text-decoration: none; }
.ico { width: 10px; height: 10px; flex: none; display: block; overflow: visible; }
input { appearance: none; margin: 0; flex: none; }

.top { display: grid; grid-template-columns: 1fr auto 1fr; height: 33px; flex: none; background: #2d2d31; border-bottom: 2px solid #7b432f; }
.brandside { display: flex; }
.logo { width: 21px; height: 21px; margin: 6px 7px 0 5px; background: #000; color: #fff; font: 700 18px/21px Lato, sans-serif; text-align: center; }
.menu { display: flex; align-items: center; height: 17px; padding-left: 6px; gap: 12px; }
.menu strong { padding-right: 8px; margin-right: -4px; border-right: 1px solid #3a3a3e; color: #d0d0d0; }
.tab { display: flex; align-items: center; gap: 3px; width: 154px; height: 14px; padding: 0 4px; background: #f85f0a; color: #fbd9b8; }
.tab span { flex: 1; white-space: nowrap; }
.tab .ico { width: 8px; height: 8px; color: #ffe9d6; }
.brand { display: flex; align-items: baseline; gap: 3px; height: 18px; padding-left: 10px; color: #fff; }
.brand span { font: 900 15px/18px Lato, sans-serif; }
.brand small { font: 700 11px/14px Roboto, sans-serif; color: #f0702a; }
.topright { display: flex; flex-direction: column; align-items: flex-end; padding-right: 2px; }
.modes { display: flex; gap: 6px; height: 13px; align-items: flex-start; font: 700 9px/11px "Noto Sans", sans-serif; color: #66666a; }
.modes > button { width: 54px; height: 13px; border: 1px solid transparent; }
.modes > .on { border-color: #a2552c; color: #fff; }
.win { display: flex; margin-left: -3px; }
.win button { width: 16px; height: 13px; display: grid; place-items: center; color: #8b8b8e; font-size: 10px; line-height: 13px; }
.win .ico { width: 9px; height: 9px; }
.top .tools { height: 18px; margin-top: 2px; }
.tools { display: flex; align-items: center; color: #77777a; }
.tool { display: grid; place-items: center; height: 14px; width: 15px; flex: none; }
.tools i { flex: none; }
.tool.small .ico { width: 5px; height: 5px; }
.tool.box { border: 1px solid #9a4f30; }
.tool.pale { border-color: #b08d6c; background: #4a4038; }
.tool.off { opacity: .45; }
.tool.lit { color: #aaaaad; }
.tool.green { color: #25b53a; }
.tool.green .ico, .tool.tiny .ico { width: 8px; height: 8px; }

.main { flex: 1; display: grid; grid-template-columns: 210px 1fr 210px; column-gap: 3px; min-height: 0; background: #3a3a3d; }
.layers, .center, .right { display: flex; flex-direction: column; min-width: 0; min-height: 0; background: #2d2d31; }
.head { display: flex; align-items: center; height: 14px; flex: none; gap: 6px; padding: 0 3px 0 5px; color: #6f6f72; }
.head span { color: #b5b5b5; }
.head .ico { width: 8px; height: 8px; }
.head > .ico:first-child { margin-right: -4px; }
.grip { flex: 1; height: 6px; margin-left: -3px; background-image: radial-gradient(circle, #46464c 35%, transparent 45%); background-size: 3px 3px; }
.bar { height: 16px; flex: none; border-bottom: 1px solid #38383b; }
.layers .bar { padding-left: 2px; }

.laybody { flex: 1; min-height: 0; padding: 6px 17px 0 7px; background: #262628; border-left: 1px solid #303034; white-space: nowrap; }
.layer { display: flex; align-items: center; height: 22px; }
.see { margin-right: 13px; color: #77777a; width: 9px; height: 9px; margin-left: 1px; }
.layer.outer .see { margin-right: 2px; }
.strip { flex: 1; display: flex; align-items: center; height: 22px; background: #363638; color: #aeaeae; }
.tri { width: 5px; height: 5px; color: #77777a; }
.outer .tri { margin-left: 3px; }
.big { width: 18px; height: 18px; margin: 0 8px 0 19px; color: #5d5d60; }
.props { display: flex; flex-direction: column; gap: 1px; padding: 5px 0 0 26px; }
.prop { display: flex; align-items: center; gap: 2px; }
.noarrow { padding-left: 7px; }
.boxed { display: flex; gap: 6px; height: 11px; line-height: 9px; border: 1px solid #606063; padding: 0 4px 0 3px; background: #2b2b2d; align-items: center; }
.boxed em { padding-left: 4px; }
em { font-style: normal; color: #67676a; }
.boxed input, .effect input { width: 6px; height: 9px; }
.boxed input::before, .effect input::before { content: "✓"; font: 7px/9px "DejaVu Sans", sans-serif; color: #ccc; display: block; }
.effect { display: flex; align-items: center; gap: 8px; width: 92px; height: 25px; padding-left: 4px; margin: 1px 0; }
.effect .ico { width: 18px; height: 18px; color: #5d5d60; }
.list { display: flex; flex-direction: column; gap: 3px; }
.tag { display: grid; place-items: center; width: 11px; height: 22px; }
.brush { width: 9px; height: 9px; margin-left: 2px; color: #5a5a5d; }
.brush.active { color: #e8641c; }
.thumb { width: 21px; height: 19px; margin: 0 8px 0 2px; color: #5a5a5d; }
.bgthumb { width: 21px; height: 21px; margin: 0 8px 0 2px; background: #000; }
.italic { font-style: italic; color: #848487; }
.edit { width: 7px; height: 7px; margin-left: auto; margin-right: 7px; color: #5d5d60; }
.last { margin-top: 4px; }
.last .brush { margin-left: 5px; }
.status { display: flex; align-items: center; gap: 5px; height: 17px; flex: none; border-top: 1px solid #3c3c3f; padding-left: 2px; font: 8px/12px "Noto Sans", sans-serif; color: #a9a9a9; }
.status label { display: flex; align-items: center; gap: 3px; }
.status input { width: 9px; height: 9px; border: 1px solid #5a5a5d; }

.hier { position: relative; flex: 572 1 0; min-height: 0; overflow: hidden; background: #232323; display: flex; justify-content: flex-end; }
.world { position: absolute; left: -213px; width: 2500px; }
.upper { top: -63px; height: 700px; }
.lower { top: -694px; height: 1400px; }
.wires { position: absolute; left: 0; top: 0; fill: none; stroke: #68686b; }
.upper .wires { stroke: #5a5a5a; }
.root { position: absolute; left: 224px; top: 70px; width: 22px; height: 25px; border-right: 1px solid #6a6a6a; color: #777; }
.root .ico { width: 19px; height: 21px; }
.hnode { position: absolute; height: 25px; display: flex; }
.hbody { position: relative; flex: 1; display: flex; align-items: center; gap: 4px; padding-left: 6px; white-space: nowrap; min-width: 0; }
.hbody .ico { width: 15px; height: 15px; color: #68686b; }
.brk { position: relative; }
.brk::before, .brk::after { content: ""; position: absolute; top: 0; bottom: 0; width: 3px; border: 1px solid #6a6a6a; }
.brk::before { left: 0; border-right: 0; }
.brk::after { right: 0; border-left: 0; }
.bnode.brk { position: absolute; }
.by, .bp, .bc { border-left: 3px solid #fec465; }
.bp { border-color: #9a98fd; }
.bc { border-color: #72fbf2; }
.fy .hbody, .fp .hbody, .fc .hbody { background: #fec465; color: #2c2a28; }
.fp .hbody { background: #9a98fd; }
.fc .hbody { background: #72fbf2; }
.fy .brk::after, .fp .brk::after, .fc .brk::after, .fy .brk::before, .fp .brk::before, .fc .brk::before { border: 0; }
.sel .hbody { border: 1px solid #7a3a24; padding-left: 5px; }
.sel .brk::before, .sel .brk::after { border: 0; }
.shade .hbody { box-shadow: 2px 2px 0 #5c5a59; background-color: #232323; }
.fp.shade .hbody { background-color: #9a98fd; }
.faded { opacity: .25; }
.dot::after { content: ""; position: absolute; right: -3px; top: 0; width: 6px; height: 6px; border-radius: 50%; background: #1fb01f; }
.mark .hbody { background-image: linear-gradient(135deg, #3a36b8 3px, transparent 3px); }
.aa { width: 15px; font: 14px/16px "Noto Serif", "Liberation Serif", serif; color: #d5d5d5; text-align: center; }
.hbody .aa { text-indent: -1px; }
.fy .aa { color: #d9b06d; }
.water { position: absolute; left: 220px; top: 581px; width: 44px; height: 44px; color: #363636; }
.vscroll { position: relative; display: flex; flex-direction: column; align-items: center; width: 10px; padding: 2px 0; background: #2b2b2e; color: #8a8a8a; }
.vscroll .ico { width: 6px; height: 6px; flex: none; }
.vthumb { width: 7px; flex: 506 1 0; margin: 2px 0 50px; background: #6b6b6d; }
.hfoot { flex: none; height: 29px; padding-top: 10px; }
.hfoot div { display: flex; align-items: center; gap: 0; height: 16px; border-top: 1px solid #38383b; padding-left: 3px; color: #77777a; }
.hfoot i { width: 4px; height: 16px; border-right: 1px solid #38383b; }
.ctitle { display: flex; align-items: center; gap: 5px; height: 14px; flex: none; padding: 0 4px 0 2px; background: #f85f0a; color: #ffd9bb; }
.ctitle .ico { width: 8px; height: 8px; }
.ctitle span { flex: 1; }
.graph { position: relative; flex: 672 1 0; min-height: 0; overflow: hidden; background: #232323; }
.group { position: absolute; background: #27272c; border: 1px solid #3d3d41; }
.bnode, .unode { position: absolute; font: 5px/10px "Liberation Sans", sans-serif; color: #8a8a8d; white-space: nowrap; }
.bnode { height: 20px; display: flex; align-items: center; gap: 7px; padding-left: 4px; }
.bnode .ico { width: 12px; height: 12px; color: #6a6a6d; opacity: .7; }
.bnode .aa, .unode .aa { width: 12px; font-size: 12px; color: #7e7e81; text-indent: -1px; }
.bnode.brk::before, .bnode.brk::after { border-color: #4d4d50; }
.bnode.sans .aa, .unode.sans .aa { font-family: "Open Sans", sans-serif; }
.bnode.bold .aa, .unode.bold .aa { font-weight: 700; }
.bnode.hi, .unode.hi { color: #e0e0e0; }
.bnode.hi::before, .bnode.hi::after { border-color: #858588; }
.bnode.hi .ico { opacity: 1; }
.unode { height: 26px; display: flex; flex-direction: column; align-items: center; gap: 2px; padding-top: 3px; }
.unode.bare { height: 20px; }
.unode::before, .unode::after { content: ""; position: absolute; left: 0; right: 0; height: 3px; border: 1px solid #555558; }
.unode::before { top: 0; border-bottom: 0; }
.unode::after { bottom: 0; border-top: 0; }
.unode .ico { width: 12px; height: 12px; color: #8a8a8d; opacity: .6; }
.unode .aa { line-height: 14px; }
.unode.hi .ico { opacity: 1; }
.unode.mid .ico { opacity: .9; }
.unode .people { width: 17px; height: 15px; margin: -1px 0 -2px; opacity: .9; }
.unode.hi::before, .unode.hi::after { border-color: #858588; }
.unode.hi .aa { color: #e6e6e6; }
.unode.picked { border: 1px solid #b05a33; background: #1b1b1b; padding-top: 2px; }
.unode.picked::before, .unode.picked::after { display: none; }
.unode.shade { box-shadow: 2px 2px 0 #58585b; background: #27272c; }

.io { gap: 4px; padding: 0 2px 0 0; color: #a8a8a8; }
.io button { display: flex; align-items: center; gap: 3px; }
.io .ico { color: #666669; }
.io .tool { justify-content: center; }
.io .tool + .tool { margin-left: -4px; }
.io .end { margin-left: auto !important; }
.pane { display: flex; min-height: 0; padding-right: 10px; border-bottom: 1px solid #404043; }
.one { flex: 644 1 0; }
.two { flex: 659 1 0; }
.inner { flex: 1; display: flex; flex-direction: column; background: #262628; padding: 7px 5px 1px 4px; min-width: 0; }
.two .inner { padding-bottom: 16px; }
.obj { display: flex; align-items: center; gap: 6px; padding-left: 5px; }
.obj .ico { width: 16px; height: 16px; }
.obj strong, .obj span { display: block; line-height: 11px; }
.obj strong { color: #c9c9c9; }
.sect { display: flex; align-items: center; gap: 4px; margin-top: 5px; padding-left: 5px; }
.sect button { height: 11px; width: 42px; line-height: 9px; border: 1px solid #66666a; background: #3b3b3e; }
.field { display: flex; align-items: center; margin-top: 1px; }
.led { width: 5px; height: 5px; margin: 0 17px 0 5px; background: #28b62c; }
.field label { width: 26px; white-space: nowrap; }
.combo { display: flex; align-items: center; width: 78px; }
.combo select { appearance: none; width: 78px; height: 11px; padding: 0 1px; border: 1px solid #77777a; border-radius: 0; background: #262628; color: #b9b9b9; font: inherit; line-height: 9px; flex: none; }
.combo .ico { width: 5px; height: 5px; margin-left: -8px; color: #ddd; }
.dia { width: 7px; height: 7px; margin-left: 10px; color: #66666a; }
.hscroll { display: flex; align-items: center; gap: 2px; margin-top: auto; height: 7px; color: #8a8a8a; }
.hscroll .ico { width: 6px; height: 6px; }
.hscroll i { flex: 1; height: 7px; margin-right: 26px; background: #6f6f71; }
.foot { height: 4px; flex: none; background: #1b161b; padding: 1px 0 0 433px; }
.foot i { display: block; width: 48px; height: 3px; background: #55555a; }
</style>
